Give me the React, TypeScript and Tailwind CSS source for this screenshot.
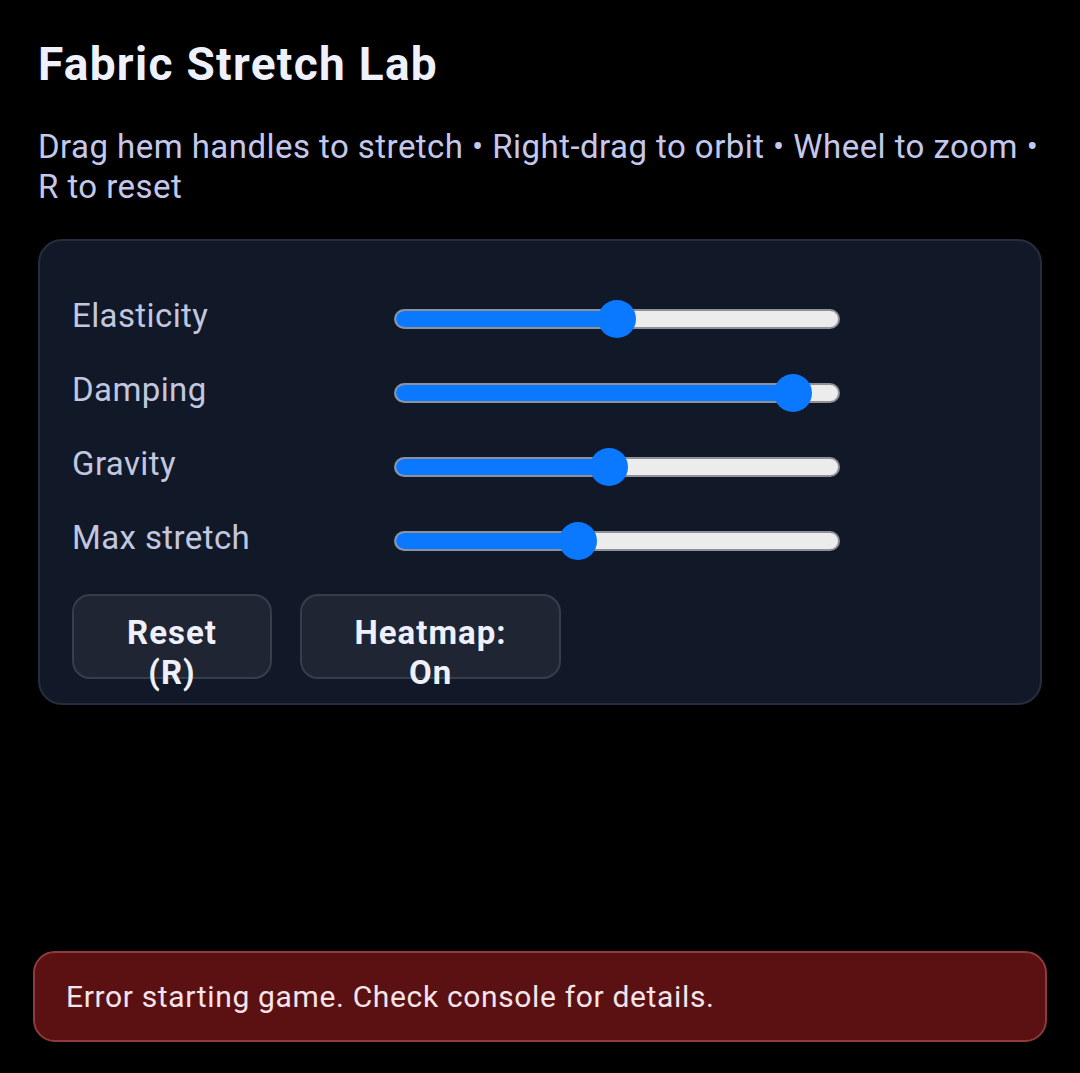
import React from "react";

type Param = { label: string; value: number };

const params: Param[] = [
  { label: "Elasticity", value: 0.5 },
  { label: "Damping", value: 0.931 },
  { label: "Gravity", value: 0.48 },
  { label: "Max stretch", value: 0.404 },
];

const TRACK = 446;
const THUMB = 38;

function Slider({ value }: { value: number }) {
  const travel = TRACK - THUMB;
  const left = value * travel;
  return (
    <div className="relative flex h-[38px] w-[446px] items-center">
      <div className="relative h-[20px] w-full overflow-hidden rounded-full border-2 border-[#8e9198] bg-[#ececec]">
        <div
          className="h-full bg-[#0a78ff]"
          style={{ width: left + THUMB / 2 }}
        />
      </div>
      <div
        className="absolute top-0 h-[38px] w-[38px] rounded-full bg-[#0a78ff]"
        style={{ left }}
      />
    </div>
  );
}

export default function App() {
  return (
    <div className="relative min-h-[1073px] bg-black px-[38px] pt-[37px] font-['Roboto',sans-serif]">
      <h1 className="text-[46px] font-bold leading-[54px] tracking-[1.3px] text-[#eef0fc]">
        Fabric Stretch Lab
      </h1>
      <p className="mt-[36px] w-[1012px] text-[33px] leading-[39.5px] tracking-[0.45px] text-[#c4c8ec]">
        Drag hem handles to stretch • Right-drag to orbit • Wheel to zoom • R to reset
      </p>

      <div className="mt-[33px] h-[466px] w-[1004px] rounded-[24px] border-2 border-[#262d3b] bg-[#111827] pl-[32px] pt-[59px]">
        <div className="grid grid-cols-[322px_446px] gap-y-[36px]">
          {params.map((p) => (
            <React.Fragment key={p.label}>
              <div className="flex h-[38px] items-center pb-[7px] text-[33px] tracking-[0.4px] text-[#c2c7e0]">
                {p.label}
              </div>
              <Slider value={p.value} />
            </React.Fragment>
          ))}
        </div>

        <div className="mt-[34px] flex gap-[28px]">
          <button className="h-[85px] w-[200px] rounded-[18px] border-2 border-[#363d4c] bg-[#1f2533] pt-[17px] text-center align-top text-[33px] font-bold leading-[39.5px] tracking-[1px] text-[#eef0fc]">
            <span className="block">Reset</span>
            <span className="block">(R)</span>
          </button>
          <button className="h-[85px] w-[261px] rounded-[18px] border-2 border-[#363d4c] bg-[#1f2533] pt-[17px] text-center align-top text-[33px] font-bold leading-[39.5px] tracking-[1px] text-[#eef0fc]">
            <span className="block">Heatmap:</span>
            <span className="block">On</span>
          </button>
        </div>
      </div>

      <div className="absolute bottom-[31px] left-[33px] right-[33px] flex h-[91px] items-center rounded-[22px] border-2 border-[#8f3b3d] bg-[#5b1011] pl-[31px] text-[30px] tracking-[0.65px] text-[#f4e4ec]">
        Error starting game. Check console for details.
      </div>
    </div>
  );
}
